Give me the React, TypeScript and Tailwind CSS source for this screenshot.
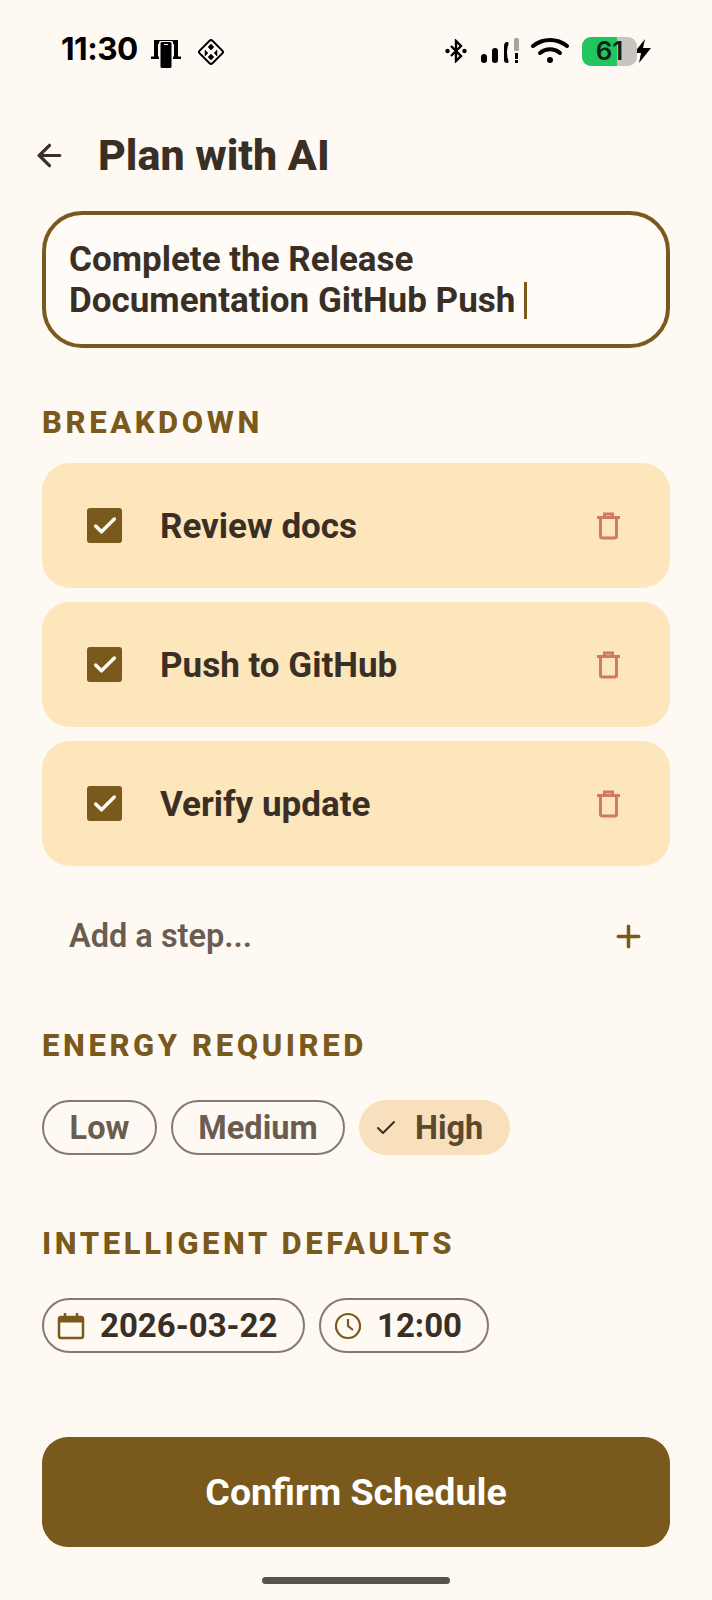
import { ArrowLeft, Check, Plus } from "lucide-react";

const steps = ["Review docs", "Push to GitHub", "Verify update"];

function StatusBar() {
  return (
    <div className="flex h-[94px] items-center justify-between pl-[61px] pr-[59px] pt-[8px] text-black">
      <div className="flex items-center">
        <span className="-mt-[4px] font-['Inter'] text-[31.5px] font-bold leading-none tracking-[-0.5px]">11:30</span>
        <svg className="ml-[13px] mt-[6px]" width="30" height="28" viewBox="0 0 30 28" fill="currentColor">
          <path d="M3 0h24v16.500h3V19h-8v-2.500h1V4H7v12.500h1V19H0v-2.500h3z" />
          <rect x="8" y="1" width="14" height="27" rx="1.500" fill="#fff9f3" />
          <rect x="9.500" y="2" width="11" height="26" rx="1.500" />
          <rect x="13" y="4" width="4" height="1" fill="#fff9f3" />
        </svg>
        <svg className="ml-[15px] mt-[2px]" width="30" height="30" viewBox="0 0 30 30" fill="none" stroke="currentColor">
          <rect x="6" y="6" width="18" height="18" rx="2" strokeWidth="2" transform="rotate(45 15 15)" />
          <path d="M15 7l3 3-3 3-3-3zM9 13l3 3-3 3zM21 13l-3 3 3 3zM15 17l3 3-3 3-3-3z" fill="currentColor" strokeWidth="0.5" />
        </svg>
      </div>
      <div className="flex items-center">
        <svg width="22" height="24" viewBox="0 0 22 24" fill="none" stroke="currentColor" strokeWidth="2.4">
          <path d="M6 7l10 10-5 5V2l5 5L6 17" />
          <circle cx="2.5" cy="12" r="1" fill="currentColor" />
          <circle cx="19.5" cy="12" r="1" fill="currentColor" />
        </svg>
        <svg className="ml-[13px]" width="40" height="28" viewBox="0 0 40 28" fill="currentColor">
          <rect x="1" y="17" width="6" height="9" rx="3" />
          <rect x="12" y="11" width="6" height="15" rx="3" />
          <path d="M27 5c1 0 2 .5 1.500 2-2 5-2 12 0 17 .5 1.500-.5 2-1.500 2-2 0-3-1-3-3V9c0-2 1-4 3-4z" />
          <rect x="34" y="1" width="5" height="13" rx="1.500" fill="#a8a29e" />
          <rect x="35" y="16" width="3" height="6" />
          <rect x="35" y="23" width="3" height="3" />
        </svg>
        <svg className="ml-[11px]" width="38" height="28" viewBox="0 0 38 28" fill="none" stroke="currentColor" strokeWidth="4" strokeLinecap="round">
          <path d="M2 9c10-8 24-8 34 0" />
          <path d="M9 16c6-5 14-5 20 0" />
          <circle cx="19" cy="23" r="3" fill="currentColor" stroke="none" />
        </svg>
        <div className="relative ml-[13px] flex h-[29px] w-[55px] items-center justify-center overflow-hidden rounded-[9px] bg-[#c8c4bf]">
          <div className="absolute inset-y-0 left-0 w-[35px] bg-[#22c55e]" />
          <span className="relative font-['Inter'] text-[26px] font-semibold leading-none text-[#0f2418]">61</span>
        </div>
        <svg className="-ml-[4px]" width="20" height="26" viewBox="0 0 20 26" fill="currentColor">
          <path d="M12 1L1 15h7l-2 10 12-15h-8z" />
        </svg>
      </div>
    </div>
  );
}

function TrashIcon() {
  return (
    <svg width="23" height="28" viewBox="0 0 23 28" fill="none" stroke="#cf7a68" strokeWidth="3">
      <path d="M0 5.500h23M7.500 4V2h8v2" />
      <path d="M3.500 6v18a2 2 0 0 0 2 2h12a2 2 0 0 0 2-2V6" />
    </svg>
  );
}

function StepCard({ label }: { label: string }) {
  return (
    <div className="flex h-[125px] items-center rounded-[28px] bg-[#fde5bc] pl-[45px] pr-[50px]">
      <div className="flex size-[35px] items-center justify-center rounded-[3px] bg-[#7a591c]">
        <Check className="size-[28px] text-[#fff9f3]" strokeWidth={3} />
      </div>
      <span className="ml-[38px] flex-1 pt-[3px] text-[35px] font-bold text-[#3a2f25]">{label}</span>
      <TrashIcon />
    </div>
  );
}

function Heading({ children }: { children: string }) {
  return <h2 className="text-[31px] font-extrabold leading-none tracking-[3.6px] text-[#7a591c]">{children}</h2>;
}

export default function App() {
  return (
    <div className="h-[1600px] w-[712px] overflow-hidden bg-[#fff9f3] font-['Roboto',sans-serif]">
      <StatusBar />
      <div className="mt-[22px] flex h-[60px] items-center pl-[32px] pt-[18px]">
        <ArrowLeft className="size-[35px] text-[#3a2f25]" strokeWidth={2.2} />
        <h1 className="ml-[31px] text-[43px] font-extrabold leading-none text-[#3a2f25]">Plan with AI</h1>
      </div>
      <div className="px-[42px]">
        <div className="mt-[35px] flex h-[137px] items-center rounded-[40px] border-[4px] border-[#7a591c] bg-[#fffbf7] pl-[23px]">
          <p className="text-[35px] font-bold leading-[41px] text-[#3a2f25]">
            Complete the Release
            <br />
            Documentation GitHub Push <span className="inline-block h-[37px] w-[3px] align-[-7px] bg-[#7a591c]" />
          </p>
        </div>
        <div className="mt-[59px]">
          <Heading>BREAKDOWN</Heading>
        </div>
        <div className="mt-[25px] flex flex-col gap-[14px]">
          {steps.map((s) => (
            <StepCard key={s} label={s} />
          ))}
        </div>
        <div className="mt-[22px] flex h-[96px] items-center justify-between pl-[27px] pr-[24px]">
          <span className="text-[32.5px] font-semibold text-[#6a5d50]">Add a step...</span>
          <Plus className="size-[35px] text-[#7a591c]" strokeWidth={2.4} />
        </div>
        <div className="mt-[46px]">
          <Heading>ENERGY REQUIRED</Heading>
        </div>
        <div className="mt-[39px] flex gap-[14px]">
          <span className="flex h-[55px] w-[115px] items-center justify-center rounded-full border-2 border-[#847a70] pt-[1px] text-[32.5px] font-bold text-[#6a5d50]">Low</span>
          <span className="flex h-[55px] w-[174px] items-center justify-center rounded-full border-2 border-[#847a70] pt-[1px] text-[32.5px] font-bold text-[#6a5d50]">Medium</span>
          <span className="flex h-[55px] w-[151px] items-center rounded-full bg-[#f8e0bd] pl-[15px] pt-[1px] text-[32.5px] font-bold text-[#5d4a2e]">
            <Check className="size-[24px] text-[#3a2f25]" strokeWidth={2} />
            <span className="ml-[17px]">High</span>
          </span>
        </div>
        <div className="mt-[73px]">
          <Heading>INTELLIGENT DEFAULTS</Heading>
        </div>
        <div className="mt-[39px] flex gap-[14px]">
          <span className="flex h-[55px] w-[263px] items-center rounded-full border-2 border-[#847a70] pl-[13px] text-[33px] font-bold text-[#3a2f25]">
            <svg width="28" height="28" viewBox="0 0 28 28" fill="none" stroke="#7a591c" strokeWidth="2.500">
              <rect x="2" y="5" width="24" height="21" rx="2" />
              <path d="M2 8h24" strokeWidth="5" />
              <path d="M8 1v4M20 1v4" />
            </svg>
            <span className="ml-[15px]">2026-03-22</span>
          </span>
          <span className="flex h-[55px] w-[170px] items-center rounded-full border-2 border-[#847a70] pl-[13px] text-[33px] font-bold text-[#3a2f25]">
            <svg width="28" height="28" viewBox="0 0 28 28" fill="none" stroke="#7a591c" strokeWidth="2.200">
              <circle cx="14" cy="14" r="12" />
              <path d="M14 7v7l5 4" />
            </svg>
            <span className="ml-[15px]">12:00</span>
          </span>
        </div>
        <button className="mt-[84px] flex h-[110px] w-full items-center justify-center rounded-[26px] bg-[#7a591c] text-[37.5px] font-bold text-white">
          Confirm Schedule
        </button>
      </div>
      <div className="mx-auto mt-[30px] h-[7px] w-[188px] rounded-full bg-[#57534e]" />
    </div>
  );
}
